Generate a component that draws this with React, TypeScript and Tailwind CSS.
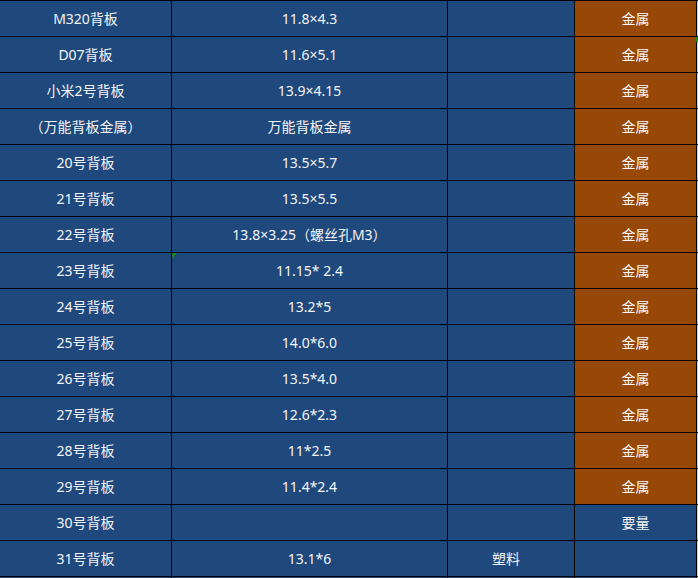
const rows: { name: string; size: string; material: string; kind: "metal" | "need" | "none" }[] = [
  { name: "M320背板", size: "11.8×4.3", material: "", kind: "metal" },
  { name: "D07背板", size: "11.6×5.1", material: "", kind: "metal" },
  { name: "小米2号背板", size: "13.9×4.15", material: "", kind: "metal" },
  { name: "（万能背板金属）", size: "万能背板金属", material: "", kind: "metal" },
  { name: "20号背板", size: "13.5×5.7", material: "", kind: "metal" },
  { name: "21号背板", size: "13.5×5.5", material: "", kind: "metal" },
  { name: "22号背板", size: "13.8×3.25（螺丝孔M3）", material: "", kind: "metal" },
  { name: "23号背板", size: "11.15* 2.4", material: "", kind: "metal" },
  { name: "24号背板", size: "13.2*5", material: "", kind: "metal" },
  { name: "25号背板", size: "14.0*6.0", material: "", kind: "metal" },
  { name: "26号背板", size: "13.5*4.0", material: "", kind: "metal" },
  { name: "27号背板", size: "12.6*2.3", material: "", kind: "metal" },
  { name: "28号背板", size: "11*2.5", material: "", kind: "metal" },
  { name: "29号背板", size: "11.4*2.4", material: "", kind: "metal" },
  { name: "30号背板", size: "", material: "", kind: "need" },
  { name: "31号背板", size: "13.1*6", material: "塑料", kind: "none" },
];

const cell = "flex items-center justify-center bg-[#1f497d] text-[14px] text-[#f4f4f4]";

export default function App() {
  return (
    <div
      className="relative w-[698px] h-[578px] overflow-hidden bg-black"
      style={{ fontFamily: '"Noto Sans", "Noto Sans CJK SC", sans-serif' }}
    >
      <div className="grid grid-cols-[171px_275px_126px_121px_1px] auto-rows-[35px] gap-px pt-px">
        {rows.map((r, i) => (
          <div key={i} className="contents">
            <div className={cell}>{r.name}</div>
            <div className={cell}>{r.size}</div>
            <div className={cell}>
              <span className="-ml-[10px]">{r.material}</span>
            </div>
            {r.kind === "metal" ? (
              <div className="flex items-center justify-center bg-[#974706] text-[14px] text-[#f8f8f8]">金属</div>
            ) : (
              <div className={cell}>{r.kind === "need" ? "要量" : ""}</div>
            )}
            <div className="bg-[#c9d3df]" />
          </div>
        ))}
        <div className="bg-[#1f497d]" />
        <div className="bg-[#1f497d]" />
        <div className="bg-[#1f497d]" />
        <div className="bg-[#1f497d]" />
        <div className="bg-[#c9d3df]" />
      </div>
      {/* error indicators */}
      <div className="absolute left-[172px] top-[253px] h-0 w-0 border-t-[5px] border-r-[5px] border-t-[#1f8a1f] border-r-transparent" />
      <div className="absolute left-[696px] top-[37px] h-[5px] w-[2px] bg-[#1f8a1f]" />
    </div>
  );
}
